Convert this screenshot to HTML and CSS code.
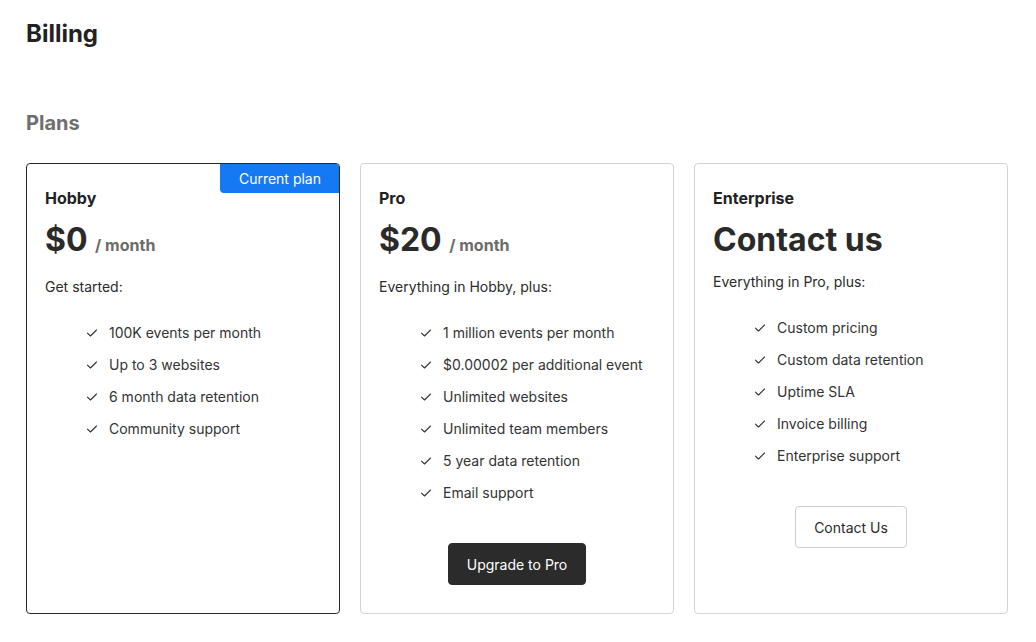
FILE: index.html
```html
<!DOCTYPE html>
<html lang="en">
<head>
<meta charset="utf-8">
<title>Billing</title>
<link rel="stylesheet" href="styles.css">
</head>
<body>
<main class="page">
  <h1 class="page-title">Billing</h1>
  <h2 class="section-title">Plans</h2>
  <div class="plans">
    <section class="plan plan--current">
      <span class="badge">Current plan</span>
      <h3 class="plan-name">Hobby</h3>
      <div class="price">$0 <span class="per">/ month</span></div>
      <p class="desc">Get started:</p>
      <ul class="features">
        <li><svg class="check" viewBox="0 0 12 12"><path d="M1.5 6.2 4.5 9 10.5 3"/></svg>100K events per month</li>
        <li><svg class="check" viewBox="0 0 12 12"><path d="M1.5 6.2 4.5 9 10.5 3"/></svg>Up to 3 websites</li>
        <li><svg class="check" viewBox="0 0 12 12"><path d="M1.5 6.2 4.5 9 10.5 3"/></svg>6 month data retention</li>
        <li><svg class="check" viewBox="0 0 12 12"><path d="M1.5 6.2 4.5 9 10.5 3"/></svg>Community support</li>
      </ul>
    </section>
    <section class="plan">
      <h3 class="plan-name">Pro</h3>
      <div class="price">$20 <span class="per">/ month</span></div>
      <p class="desc">Everything in Hobby, plus:</p>
      <ul class="features">
        <li><svg class="check" viewBox="0 0 12 12"><path d="M1.5 6.2 4.5 9 10.5 3"/></svg>1 million events per month</li>
        <li><svg class="check" viewBox="0 0 12 12"><path d="M1.5 6.2 4.5 9 10.5 3"/></svg>$0.00002 per additional event</li>
        <li><svg class="check" viewBox="0 0 12 12"><path d="M1.5 6.2 4.5 9 10.5 3"/></svg>Unlimited websites</li>
        <li><svg class="check" viewBox="0 0 12 12"><path d="M1.5 6.2 4.5 9 10.5 3"/></svg>Unlimited team members</li>
        <li><svg class="check" viewBox="0 0 12 12"><path d="M1.5 6.2 4.5 9 10.5 3"/></svg>5 year data retention</li>
        <li><svg class="check" viewBox="0 0 12 12"><path d="M1.5 6.2 4.5 9 10.5 3"/></svg>Email support</li>
      </ul>
      <div class="actions"><button class="btn btn--dark">Upgrade to Pro</button></div>
    </section>
    <section class="plan">
      <h3 class="plan-name">Enterprise</h3>
      <div class="price price--custom">Contact us</div>
      <p class="desc">Everything in Pro, plus:</p>
      <ul class="features">
        <li><svg class="check" viewBox="0 0 12 12"><path d="M1.5 6.2 4.5 9 10.5 3"/></svg>Custom pricing</li>
        <li><svg class="check" viewBox="0 0 12 12"><path d="M1.5 6.2 4.5 9 10.5 3"/></svg>Custom data retention</li>
        <li><svg class="check" viewBox="0 0 12 12"><path d="M1.5 6.2 4.5 9 10.5 3"/></svg>Uptime SLA</li>
        <li><svg class="check" viewBox="0 0 12 12"><path d="M1.5 6.2 4.5 9 10.5 3"/></svg>Invoice billing</li>
        <li><svg class="check" viewBox="0 0 12 12"><path d="M1.5 6.2 4.5 9 10.5 3"/></svg>Enterprise support</li>
      </ul>
      <div class="actions"><button class="btn btn--outline">Contact Us</button></div>
    </section>
  </div>
</main>
</body>
</html>
```
FILE: styles.css
```css
* { box-sizing: border-box; }
html, body { margin: 0; padding: 0; background: #fff; }
body {
  font-family: Inter, "Noto Sans", "Liberation Sans", sans-serif;
  color: #2a2a2a;
}
.page { padding: 18px 28px 0 26px; }
.page-title {
  margin: 0;
  font-size: 24px;
  line-height: 32px;
  font-weight: 700;
  color: #222;
}
.section-title {
  margin: 59px 0 0;
  font-size: 20px;
  line-height: 28px;
  font-weight: 700;
  color: #6e6e6e;
}
.plans {
  margin-top: 26px;
  display: grid;
  grid-template-columns: repeat(3, 314px);
  gap: 20px;
}
.plan {
  position: relative;
  border: 1px solid #d3d3d3;
  border-radius: 4px;
  padding: 22px 18px 28px;
  display: flex;
  flex-direction: column;
}
.plan--current { border-color: #2a2a2a; }
.badge {
  position: absolute;
  top: 0;
  right: 0;
  height: 29px;
  line-height: 29px;
  padding: 0 18px 0 19px;
  background: #1579f3;
  color: #fff;
  font-size: 14px;
  border-radius: 0 3px 0 4px;
}
.plan-name {
  margin: 0;
  font-size: 16px;
  line-height: 24px;
  font-weight: 700;
  color: #222;
}
.price {
  margin: 10px 0 17px;
  font-size: 32px;
  line-height: 40px;
  font-weight: 700;
  color: #2a2a2a;
}
.price--custom { margin-bottom: 12px; }
.per {
  font-size: 16px;
  line-height: 1;
  font-weight: 700;
  color: #6b6b6b;
}
.desc {
  margin: 0;
  font-size: 14px;
  line-height: 20px;
  color: #2a2a2a;
}
.features {
  list-style: none;
  margin: 26px 0 0;
  padding: 0 0 0 41px;
  display: flex;
  flex-direction: column;
  gap: 12px;
}
.features li {
  display: flex;
  align-items: center;
  gap: 11px;
  font-size: 14px;
  line-height: 20px;
  color: #333;
}
.check {
  width: 12px;
  height: 12px;
  flex: none;
  fill: none;
  stroke: #333;
  stroke-width: 1.1;
  stroke-linecap: round;
  stroke-linejoin: round;
}
.actions {
  margin-top: 40px;
  display: flex;
  justify-content: center;
}
.btn {
  height: 42px;
  padding: 0 18px;
  font-family: inherit;
  font-size: 14px;
  font-weight: 400;
  border-radius: 4px;
  cursor: pointer;
}
.btn--dark {
  background: #2b2b2b;
  color: #fff;
  border: 1px solid #2b2b2b;
}
.btn--outline {
  background: #fff;
  color: #2a2a2a;
  border: 1px solid #cfcfcf;
}
```
